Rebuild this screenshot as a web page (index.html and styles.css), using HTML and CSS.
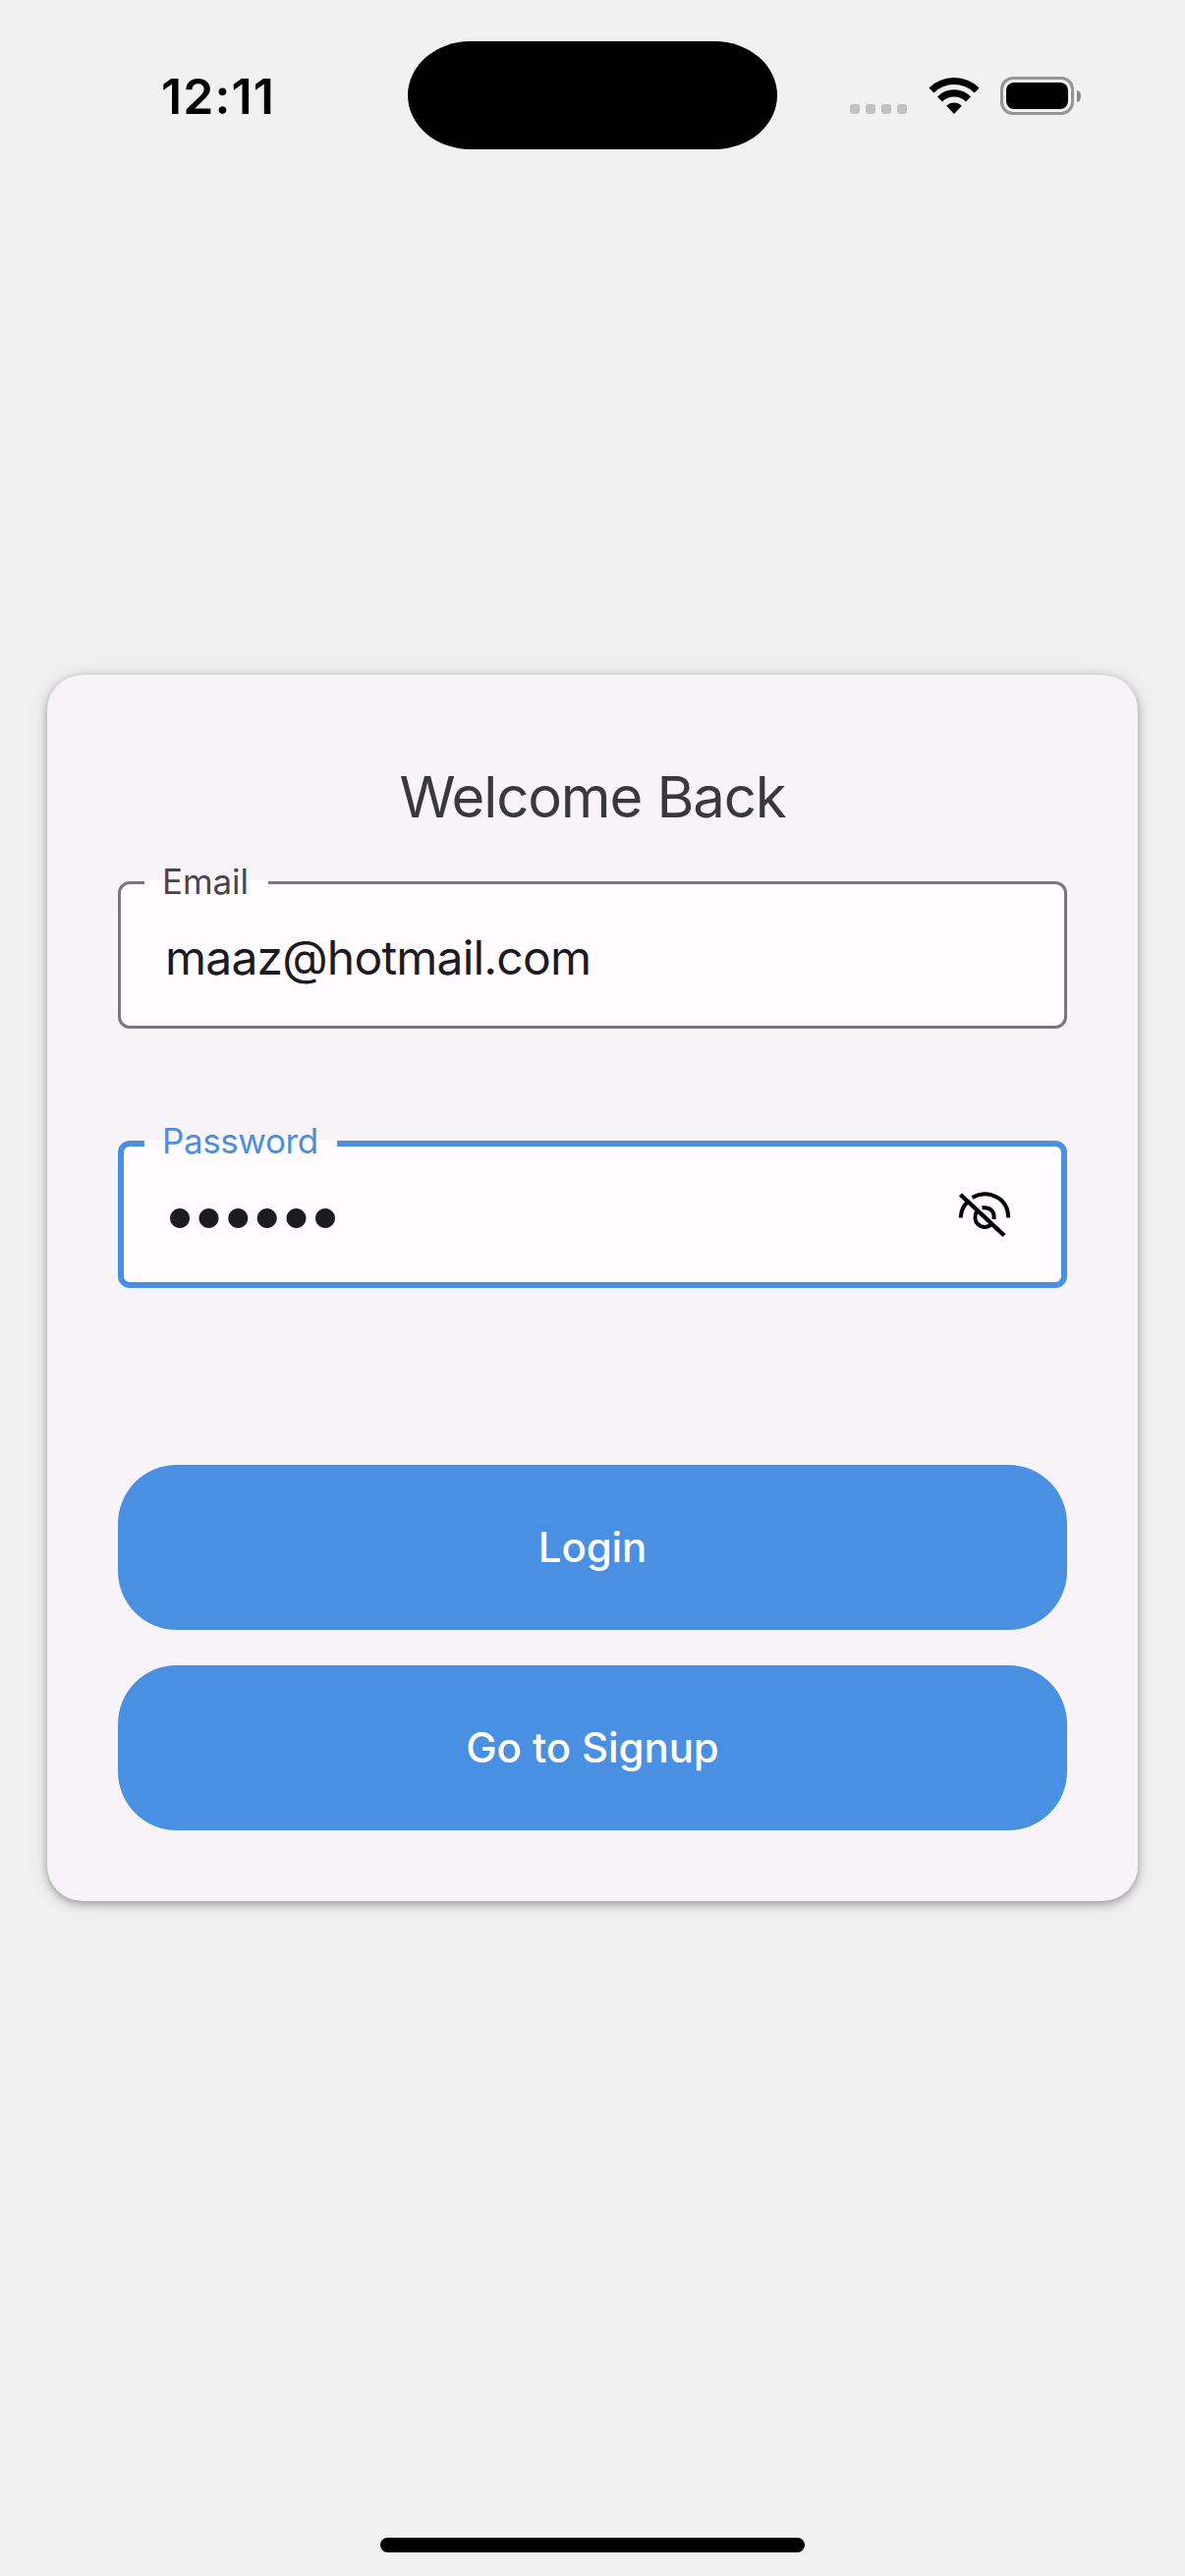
FILE: index.html
```html
<!DOCTYPE html>
<html lang="en">
<head>
<meta charset="utf-8">
<title>Login</title>
<link rel="stylesheet" href="styles.css">
</head>
<body>
<div class="screen">
  <header class="status-bar">
    <div class="time">12:11</div>
    <div class="island"></div>
    <div class="indicators">
      <div class="signal"><i></i><i></i><i></i><i></i></div>
      <svg class="wifi" viewBox="0 0 52 39" width="52" height="39">
        <path d="M2.9 14.1 A32.7 32.7 0 0 1 49.1 14.1" fill="none" stroke="#000" stroke-width="7.1"/>
        <path d="M11.5 22.9 A20.5 20.5 0 0 1 40.5 22.9" fill="none" stroke="#000" stroke-width="7.1"/>
        <path d="M18.2 29.7 A11.3 11.3 0 0 1 33.8 29.7 L26 38 Z" fill="#000"/>
      </svg>
      <div class="battery">
        <div class="battery-body"><div class="battery-level"></div></div>
        <div class="battery-tip"></div>
      </div>
    </div>
  </header>
  <main class="content">
    <form class="card">
      <h1 class="title">Welcome Back</h1>
      <div class="field">
        <label class="field-label">Email</label>
        <div class="field-value">maaz@hotmail.com</div>
      </div>
      <div class="field field-active">
        <label class="field-label">Password</label>
        <div class="field-value secret">••••••</div>
        <svg class="eye" viewBox="0 0 60 54" width="60" height="54" fill="none" stroke="#000" stroke-width="4">
          <path d="M5.7 31.5 C6 25 8 20 12.5 15.5"/>
          <path d="M17.5 11 C34 2 54 11 54.2 31.5"/>
          <path d="M22.3 24.5 C16 36 27 45 36.2 39"/>
          <path d="M27.5 21.3 C36 20.5 40.5 25 39.5 33"/>
          <path d="M5.5 8 L50 49.5" stroke-width="4.4"/>
        </svg>
      </div>
      <button class="button" type="button">Login</button>
      <button class="button" type="button">Go to Signup</button>
    </form>
  </main>
  <footer class="home"><div class="home-bar"></div></footer>
</div>
</body>
</html>
```
FILE: styles.css
```css
* { box-sizing: border-box; }
body { margin: 0; background: #f1f1f1; font-family: Inter, sans-serif; }
.screen { width: 1206px; height: 2622px; display: flex; flex-direction: column; }
.status-bar { height: 194px; display: grid; grid-template-columns: 415px 376px 415px; padding-top: 42px; }
.time { padding: 26px 0 0 164px; font-size: 50px; font-weight: 600; line-height: 60px; letter-spacing: 1.1px; white-space: nowrap; }
.island { height: 110px; background: #000; border-radius: 64px / 55px; }
.indicators { display: flex; padding: 36px 0 0 74px; }
.signal { display: flex; gap: 6px; padding-top: 28px; margin-right: 22px; }
.signal i { width: 10px; height: 10px; border-radius: 3px; background: #c2c2c2; }
.wifi { margin-right: 21px; }
.battery { display: flex; align-items: center; gap: 3px; height: 39px; }
.battery-body { width: 75px; height: 39px; border: 3px solid #959595; border-radius: 13px; padding: 3px; }
.battery-level { height: 27px; background: #000; border-radius: 8px; }
.battery-tip { width: 4px; height: 12px; background: #858585; border-radius: 0 4px 4px 0 / 0 6px 6px 0; }
.content { flex: 1; padding: 493px 48px 0; }
.card { height: 1248px; padding: 84px 72px 72px; border-radius: 36px; background: #f7f3f9; box-shadow: 0 3px 9px rgba(0,0,0,.3), 0 2px 22px rgba(0,0,0,.12); display: flex; flex-direction: column; }
.title { margin: 0 0 30px; height: 96px; font-size: 58px; font-weight: 400; line-height: 80px; letter-spacing: -1.1px; text-align: center; color: #39383d; white-space: nowrap; }
.card > * { flex-shrink: 0; }
.field { position: relative; height: 150px; border: 3px solid #7a757f; border-radius: 12px; background: #fffbff; margin-bottom: 114px; padding-left: 45px; }
.field-label { position: absolute; left: 24px; top: -25px; width: 126px; height: 44px; line-height: 44px; padding-left: 18px; font-size: 35px; letter-spacing: -0.1px; color: #49454f; white-space: nowrap; background: linear-gradient(#fffbff, #fffbff) 0 21px / 100% 14px no-repeat; }
.field-value { font-size: 48px; line-height: 149px; letter-spacing: -0.8px; color: #1c1b1f; white-space: nowrap; }
.field-active { border: 6px solid #4990e2; padding-left: 39px; display: flex; justify-content: space-between; margin-bottom: 180px; }
.field-active .field-label { left: 21px; top: -28px; width: 196px; letter-spacing: -0.4px; color: #4990e2; }
.secret { font-size: 64px; line-height: 137px; letter-spacing: -6.4px; }
.eye { margin: 41px 48px 0 0; }
.button { height: 168px; margin: 0 0 36px; border: 0; border-radius: 60px; background: #4990e2; color: #fff; font: 500 42px/168px Inter, sans-serif; letter-spacing: -0.1px; padding: 0; }
.home { height: 39px; display: flex; justify-content: center; }
.home-bar { width: 432px; height: 15px; border-radius: 8px; background: #000; }
```
